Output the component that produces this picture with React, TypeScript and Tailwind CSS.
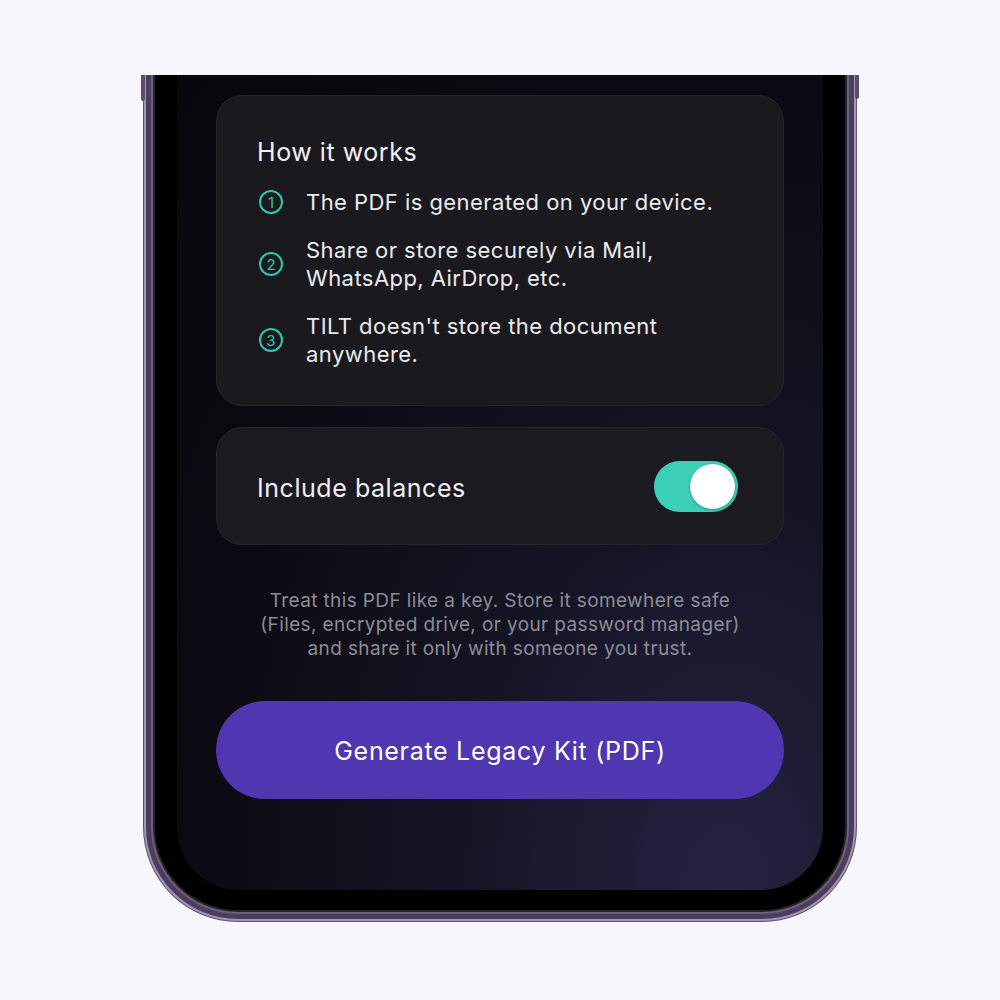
import React from "react";

const font = { fontFamily: "Inter, 'Noto Sans', sans-serif" };

function Num({ n }: { n: number }) {
  return (
    <div className="w-[24px] h-[24px] shrink-0 rounded-full border-[2px] border-[#2fc7ab] flex items-center justify-center text-[#2fc7ab] text-[15px] font-normal leading-none">
      {n}
    </div>
  );
}

function Item({ n, children }: { n: number; children: React.ReactNode }) {
  return (
    <div className="flex items-center gap-[23px] pl-[2px]">
      <Num n={n} />
      <div className="text-[22px] leading-[28px] text-[#ebebee] tracking-[0.45px]">{children}</div>
    </div>
  );
}

export default function App() {
  return (
    <div
      style={font}
      className="w-[1000px] h-[1000px] bg-[#f7f6fd] overflow-hidden flex justify-center pt-[75px]"
    >
      <div className="relative w-[714px] h-[847px] bg-[#5d5170] px-[1px] pb-[1px] rounded-b-[95px] flex">
        <div className="absolute left-[-2px] top-0 w-[4px] h-[26px] rounded-b-[2px] bg-[#5a4e6d]" />
        <div className="absolute right-[-2px] top-0 w-[4px] h-[24px] rounded-b-[2px] bg-[#5a4e6d]" />
        <div className="flex-1 flex bg-[#a394b8] px-[2px] pb-[2px] rounded-b-[94px]">
          <div className="flex-1 flex bg-[#4a3e5b] px-[5px] pb-[5px] rounded-b-[92px]">
            <div className="flex-1 flex bg-[#6c5f80] px-[2px] pb-[2px] rounded-b-[87px]">
              <div className="flex-1 flex bg-[#26232b] px-[2px] pb-[2px] rounded-b-[85px]">
                <div className="flex-1 flex bg-black px-[22px] pb-[20px] rounded-b-[83px]">
                  <div className="flex-1 rounded-b-[62px] overflow-hidden bg-[radial-gradient(ellipse_at_85%_100%,#252341_0%,#151424_35%,#0b0a12_70%,#08070c_100%)] px-[39px] pt-[20px] flex flex-col">
                    <div className="rounded-[26px] bg-[#1a191e] border border-[#25242a] pt-[40px] pb-[37px] px-[40px] flex flex-col gap-[20px]">
                      <div className="text-[25px] leading-[32px] text-[#f1f1f3] tracking-[0.55px]">How it works</div>
                      <Item n={1}>The PDF is generated on your device.</Item>
                      <Item n={2}>
                        Share or store securely via Mail,
                        <br />
                        WhatsApp, AirDrop, etc.
                      </Item>
                      <Item n={3}>
                        TILT doesn't store the document
                        <br />
                        anywhere.
                      </Item>
                    </div>

                    <div className="mt-[21px] h-[118px] rounded-[26px] bg-[#1b1a20] border border-[#26252b] pl-[40px] pr-[45px] flex items-center justify-between">
                      <div className="text-[25px] leading-[32px] text-[#f1f1f3] tracking-[0.55px] pt-[4px]">Include balances</div>
                      <div className="w-[84px] h-[51px] rounded-full bg-[#3dcfb6] p-[3px] flex justify-end items-center">
                        <div className="w-[45px] h-[45px] rounded-full bg-white shadow-[0_1px_3px_rgba(0,0,0,0.3)]" />
                      </div>
                    </div>

                    <div className="mt-[44px] text-center text-[19px] leading-[24px] text-[#8d8c95] tracking-[0.38px]">
                      Treat this PDF like a key. Store it somewhere safe
                      <br />
                      (Files, encrypted drive, or your password manager)
                      <br />
                      and share it only with someone you trust.
                    </div>

                    <div className="mt-[40px] h-[98px] rounded-full bg-[#4f37b2] flex items-center justify-center text-white text-[25px] tracking-[0.7px] pt-[4px]">
                      Generate Legacy Kit (PDF)
                    </div>
                  </div>
                </div>
              </div>
            </div>
          </div>
        </div>
      </div>
    </div>
  );
}
